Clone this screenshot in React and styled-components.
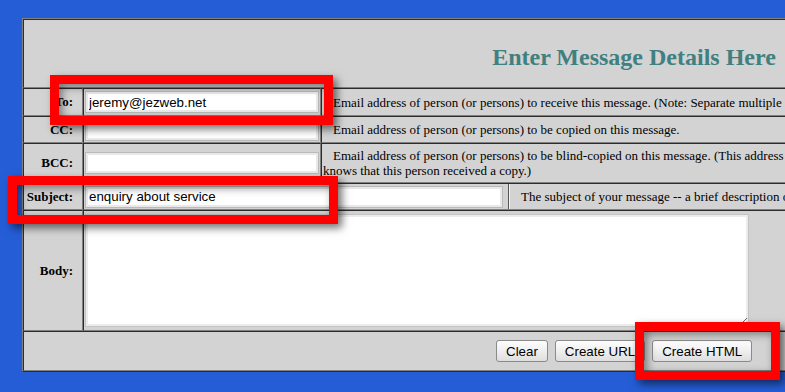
import React from "react";
import styled, { createGlobalStyle } from "styled-components";

const Global = createGlobalStyle`
  html, body { margin: 0; padding: 0; background: #245dd6; overflow: hidden; }
  body { width: 785px; height: 392px; }
`;

const Stage = styled.div`
  position: relative;
  width: 785px;
  height: 392px;
  overflow: hidden;
  padding: 18px 0 0 22px;
  box-sizing: border-box;
`;

const Form = styled.table`
  width: 1224px;
  table-layout: fixed;
  border-spacing: 0;
  border: 1px outset #808080;
  background: #d3d3d3;
  font-family: "Liberation Serif", "Times New Roman", serif;
  font-size: 13px;
  color: #000;
`;

const Cell = styled.td`
  border: 1px inset #808080;
  padding: 1px;
  height: ${(p) => p.$h}px;
  box-sizing: border-box;
  vertical-align: middle;
`;

const Header = styled(Cell)`
  text-align: center;
  font-size: 24px;
  font-weight: bold;
  color: #408080;
  padding-top: 8px;
`;

const Label = styled(Cell)`
  text-align: right;
  font-weight: bold;
  padding-right: 9px;
`;

const Desc = styled(Cell)`
  text-indent: 10px;
  line-height: 15px;
`;

const Field = styled.input`
  box-sizing: border-box;
  width: ${(p) => p.$w}px;
  height: 22px;
  display: block;
  margin: 0;
  border: 1px solid #b9b9b9;
  box-shadow: inset 0 0 0 2px #e9e9e9;
  background: #fff;
  padding: 0 3px;
  font-family: "Liberation Sans", Arial, sans-serif;
  font-size: 13.33px;
  color: #000;
  outline: none;
`;

const SplitRow = styled.div`
  display: flex;
  align-items: stretch;
  height: 100%;
`;

const SplitField = styled.div`
  width: 422px;
  padding: 1px;
  display: flex;
  align-items: center;
  border-right: 1px solid #555;
`;

const SplitDesc = styled.div`
  flex: 1;
  display: flex;
  align-items: center;
  padding-left: 11px;
  border-left: 1px solid #f4f4f4;
`;

const BodyArea = styled.textarea`
  box-sizing: border-box;
  display: block;
  width: 664px;
  height: 113px;
  margin: 0;
  border: 1px solid #c4c4c4;
  box-shadow: inset 0 0 0 2px #ececec;
  background: #fff;
  font-family: "Liberation Sans", Arial, sans-serif;
  font-size: 13.33px;
  outline: none;
`;

const ButtonBar = styled.div`
  display: flex;
  gap: 7px;
  padding-left: 471px;
`;

const Button = styled.button`
  height: 22px;
  padding: 0 9px;
  border: 1px solid #8a8a8a;
  border-radius: 3px;
  background: linear-gradient(#fdfdfd, #f0f0f0 45%, #dedede);
  font-family: "Liberation Sans", Arial, sans-serif;
  font-size: 13.33px;
  color: #000;
`;

const Callout = styled.div`
  position: absolute;
  left: ${(p) => p.$x}px;
  top: ${(p) => p.$y}px;
  width: ${(p) => p.$w}px;
  height: ${(p) => p.$h}px;
  box-sizing: border-box;
  border: 9px solid #ff0000;
  box-shadow: 4px 4px 8px rgba(0, 0, 0, 0.55), inset 3px 3px 9px rgba(0, 0, 0, 0.45);
  pointer-events: none;
`;

export default function App() {
  return (
    <>
      <Global />
      <Stage>
        <Form>
          <colgroup>
            <col style={{ width: 60 }} />
            <col style={{ width: 238 }} />
            <col />
          </colgroup>
          <tbody>
            <tr>
              <Header colSpan={3} $h={69}>Enter Message Details Here</Header>
            </tr>
            <tr>
              <Label $h={28}>To:</Label>
              <Cell $h={28}><Field $w={234} defaultValue="jeremy@jezweb.net" /></Cell>
              <Desc $h={28}>Email address of person (or persons) to receive this message. (Note: Separate multiple e-mail addresses with a comma.)</Desc>
            </tr>
            <tr>
              <Label $h={27}>CC:</Label>
              <Cell $h={27}><Field $w={234} defaultValue="" /></Cell>
              <Desc $h={27}>Email address of person (or persons) to be copied on this message.</Desc>
            </tr>
            <tr>
              <Label $h={40}>BCC:</Label>
              <Cell $h={40}><Field $w={234} defaultValue="" /></Cell>
              <Desc $h={40}>
                Email address of person (or persons) to be blind-copied on this message. (This address is hidden from the other recipients, so nobody else
                <br />
                knows that this person received a copy.)
              </Desc>
            </tr>
            <tr>
              <Label $h={27}>Subject:</Label>
              <Cell colSpan={2} $h={27} style={{ padding: 0 }}>
                <SplitRow>
                  <SplitField><Field $w={418} defaultValue="enquiry about service" /></SplitField>
                  <SplitDesc>The subject of your message -- a brief description of what the message is about.</SplitDesc>
                </SplitRow>
              </Cell>
            </tr>
            <tr>
              <Label $h={121}>Body:</Label>
              <Cell colSpan={2} $h={121}><BodyArea defaultValue="" /></Cell>
            </tr>
            <tr>
              <Cell colSpan={3} $h={40}>
                <ButtonBar>
                  <Button>Clear</Button>
                  <Button>Create URL</Button>
                  <Button>Create HTML</Button>
                </ButtonBar>
              </Cell>
            </tr>
          </tbody>
        </Form>
        <Callout $x={50} $y={75} $w={283} $h={50} />
        <Callout $x={8} $y={176} $w={330} $h={48} />
        <Callout $x={635} $y={322} $w={145} $h={58} />
      </Stage>
    </>
  );
}
